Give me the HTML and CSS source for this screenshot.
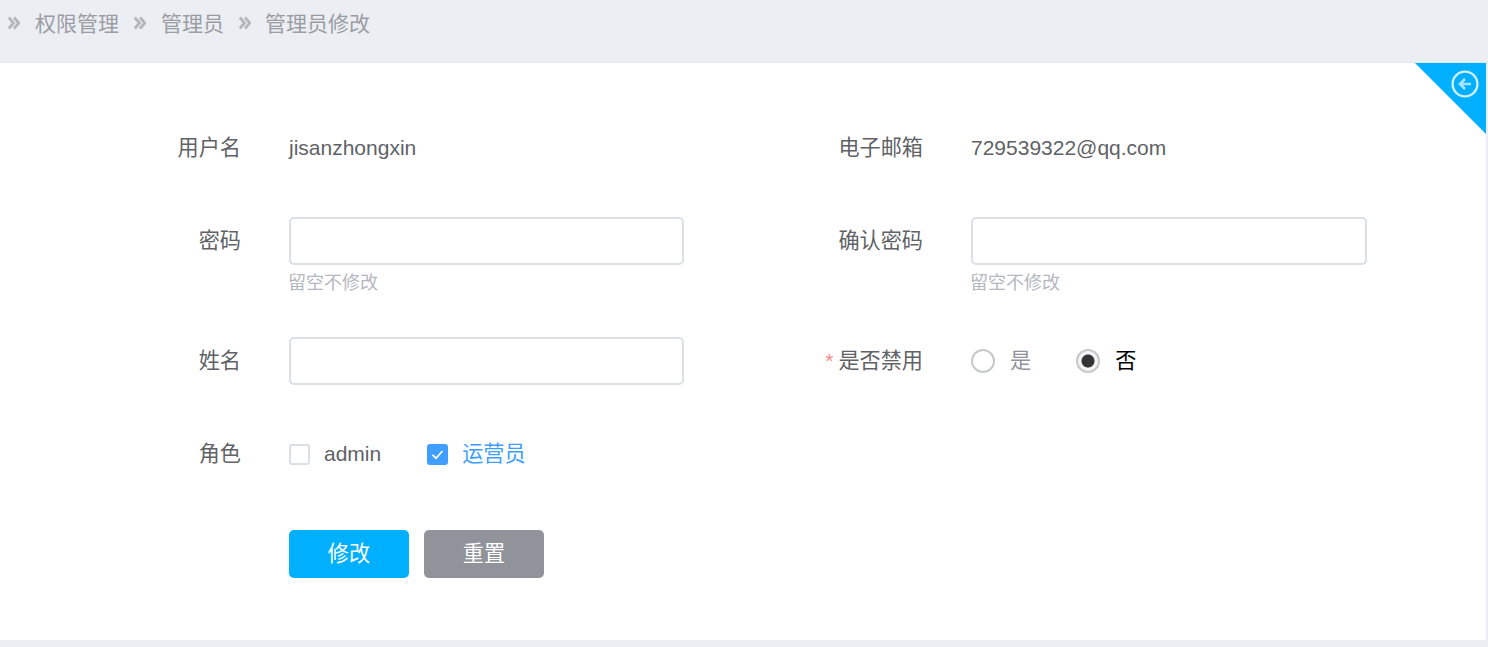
FILE: index.html
```html
<!DOCTYPE html>
<html lang="zh-CN">
<head>
<meta charset="utf-8">
<title>管理员修改</title>
<link rel="stylesheet" href="styles.css">
</head>
<body>
<nav class="crumbs">
  <svg class="sep" viewBox="0 0 12 14"><path d="M0.8 1.5 5.5 7 0.8 12.5M6 1.5 10.8 7 6 12.5"/></svg><span class="crumb">权限管理</span>
  <svg class="sep" viewBox="0 0 12 14"><path d="M0.8 1.5 5.5 7 0.8 12.5M6 1.5 10.8 7 6 12.5"/></svg><span class="crumb">管理员</span>
  <svg class="sep" viewBox="0 0 12 14"><path d="M0.8 1.5 5.5 7 0.8 12.5M6 1.5 10.8 7 6 12.5"/></svg><span class="crumb">管理员修改</span>
</nav>
<main class="panel">
  <a class="corner">
    <svg class="back" viewBox="0 0 28 28"><circle cx="14" cy="14" r="12.4"/><path class="arrow" d="M20 14H9M14 9l-5 5 5 5"/></svg>
  </a>
  <form class="form">
    <div class="row row-a">
      <div class="item"><label class="label">用户名</label><div class="text">jisanzhongxin</div></div>
      <div class="item"><label class="label">电子邮箱</label><div class="text">729539322@qq.com</div></div>
    </div>
    <div class="row row-b">
      <div class="item"><label class="label">密码</label><div class="field"><input class="input" type="password"><div class="hint">留空不修改</div></div></div>
      <div class="item"><label class="label">确认密码</label><div class="field wide"><input class="input" type="password"><div class="hint">留空不修改</div></div></div>
    </div>
    <div class="row row-c">
      <div class="item"><label class="label">姓名</label><div class="field"><input class="input" type="text"></div></div>
      <div class="item">
        <label class="label"><span class="req">*</span>是否禁用</label>
        <div class="options">
          <span class="radio"></span><span class="opt-text muted">是</span>
          <span class="radio on"></span><span class="opt-text dark">否</span>
        </div>
      </div>
    </div>
    <div class="row row-d">
      <div class="item">
        <label class="label">角色</label>
        <div class="options">
          <span class="check"></span><span class="opt-text latin">admin</span>
          <span class="check on"><svg viewBox="0 0 21 21"><path d="M5.5 10.8 9 14.2 15.5 7"/></svg></span><span class="opt-text blue">运营员</span>
        </div>
      </div>
    </div>
    <div class="actions">
      <button class="btn primary" type="button">修改</button>
      <button class="btn gray" type="button">重置</button>
    </div>
  </form>
</main>
</body>
</html>
```
FILE: styles.css
```css
* { box-sizing: border-box; }
html, body { margin: 0; height: 647px; overflow: hidden; }
body {
  background: #ebeef3;
  font-family: "Liberation Sans", "Noto Sans CJK SC", sans-serif;
  font-size: 21.15px;
  color: #606266;
}
.crumbs {
  height: 63px;
  padding: 11px 0 0 8px;
  display: flex;
  align-items: flex-start;
  line-height: 26px;
  font-size: 21px;
  color: #9b9da3;
  border-bottom: 1px solid #e4e8ee;
}
.sep {
  width: 12px;
  height: 14px;
  margin: 5px 15px 0 0;
  fill: none;
  stroke: #b4b6ba;
  stroke-width: 2.8;
  flex: none;
}
.crumb { margin-right: 15px; }
.crumb:last-child { margin-left: -1px; }
.panel {
  position: relative;
  width: 1486px;
  height: 577px;
  background: #fff;
  padding-top: 61px;
}
.corner {
  position: absolute;
  top: 0;
  right: 0;
  width: 71px;
  height: 71px;
  background: #00b0ff;
  clip-path: polygon(0 0, 100% 0, 100% 100%);
}
.back {
  position: absolute;
  top: 7px;
  right: 7px;
  width: 28px;
  height: 28px;
  fill: none;
  stroke: #d2f0ff;
  stroke-width: 2.4;
}
.arrow { stroke: #a9e3ff; stroke-width: 2.6; }
.form { display: flex; flex-direction: column; }
.row { display: flex; }
.row-a { height: 48px; margin-bottom: 45px; }
.row-b { height: 48px; margin-bottom: 72px; }
.row-c { height: 48px; margin-bottom: 45px; }
.row-d { height: 48px; margin-bottom: 52px; }
.item { display: flex; align-items: center; width: 682px; }
.label {
  width: 241px;
  text-align: right;
  margin-right: 48px;
  flex: none;
  line-height: 48px;
  white-space: nowrap;
}
.req { color: #f78989; margin-right: 5px; font-size: 21px; line-height: 20px; }
.text { line-height: 48px; font-size: 21px; }
.field { position: relative; width: 395px; height: 48px; flex: none; }
.field.wide { width: 396px; }
.input {
  display: block;
  width: 100%;
  height: 48px;
  border: 2px solid #dcdfe6;
  border-radius: 5px;
  background: #fff;
  outline: none;
}
.hint {
  position: absolute;
  top: 52px;
  left: -1px;
  font-size: 18px;
  line-height: 28px;
  color: #b4b8bf;
}
.options { display: flex; align-items: center; height: 48px; }
.radio {
  width: 24px;
  height: 24px;
  border: 2px solid #c6c8cc;
  border-radius: 50%;
  background: #fff;
  margin-right: 15px;
  flex: none;
}
.radio.on {
  background: radial-gradient(circle, #333 0 6px, #f5f5f5 7px);
}
.opt-text { margin-right: 45px; line-height: 26px; height: 26px; }
.latin { font-size: 21px; margin-left: -1px; margin-right: 46px; }
.muted { color: #909399; }
.dark { color: #000; }
.blue { color: #409eff; }
.check {
  width: 21px;
  height: 21px;
  border: 2px solid #dcdfe6;
  border-radius: 3px;
  margin-right: 15px;
  flex: none;
  display: flex;
}
.check.on { background: #409eff; border: 0; margin-right: 14px; }
.check svg { width: 100%; height: 100%; fill: none; stroke: #fff; stroke-width: 1.7; }
.actions { display: flex; gap: 15px; padding-left: 289px; }
.btn {
  width: 120px;
  height: 48px;
  border: 0;
  border-radius: 5px;
  color: #fff;
  font: inherit;
  padding: 0;
  line-height: 26px;
}
.primary { background: #00b0ff; }
.gray { background: #909399; }
```
